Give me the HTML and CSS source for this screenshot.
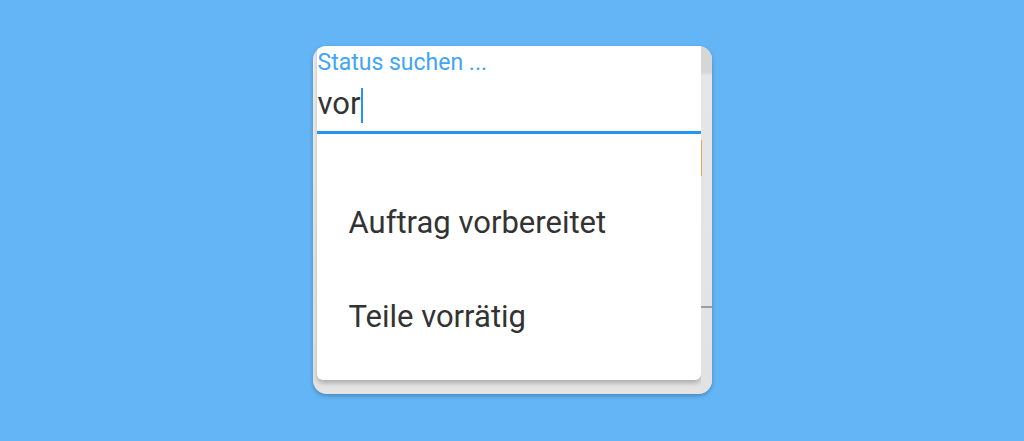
FILE: index.html
```html
<!DOCTYPE html>
<html lang="de">

<head>
    <meta charset="UTF-8">
    <meta name="viewport" content="width=device-width, initial-scale=1.0">
    <title>Status suchen</title>
    <link rel="stylesheet" href="styles.css">
</head>

<body>
    <div class="stage">
        <div class="status-card">
            <!-- Suchfeld mit Vorschlagsliste -->
            <div class="search-panel">
                <label class="search-label" for="status-search">Status suchen ...</label>
                <div class="search-input">
                    <span id="status-search" class="search-value">vor</span><span class="search-caret"></span>
                </div>
                <div class="search-line"></div>

                <ul class="suggest-list">
                    <li class="suggest-item">Auftrag vorbereitet</li>
                    <li class="suggest-item">Teile vorrätig</li>
                </ul>
            </div>

            <!-- Rand der Karte darunter -->
            <div class="card-edge">
                <div class="edge-mark"></div>
                <div class="edge-rule"></div>
            </div>
        </div>
    </div>
</body>

</html>
```

FILE: styles.css
```css
html,
body {
    margin: 0;
    height: 100%;
}

body {
    background: #64b5f6;
    font-family: Roboto, "Noto Sans", Arial, sans-serif;
}

.stage {
    display: flex;
    justify-content: center;
    padding-top: 46px;
}

.status-card {
    display: flex;
    width: 399px;
    height: 348px;
    padding-left: 4px;
    box-sizing: border-box;
    background: linear-gradient(to bottom, #f2f2f2, #e4e4e4);
    border-radius: 14px;
    box-shadow: 0 2px 4px rgba(0, 0, 0, 0.25);
    overflow: hidden;
}

/* Suchfeld */

.search-panel {
    display: flex;
    flex-direction: column;
    width: 384px;
    height: 334px;
    background: #fff;
    border-radius: 0 0 6px 6px;
    box-shadow: 0 3px 5px rgba(0, 0, 0, 0.25);
}

.search-label {
    display: block;
    margin: 4px 0 0 1px;
    font-size: 23px;
    line-height: 26px;
    color: #42a5f5;
}

.search-input {
    display: flex;
    align-items: center;
    height: 46px;
    margin: 4px 0 0 1px;
}

.search-value {
    font-size: 31px;
    color: #333;
}

.search-caret {
    width: 2px;
    height: 35px;
    margin: 4px 0 0 1px;
    background: #2196f3;
}

.search-line {
    height: 3px;
    margin-top: 5px;
    background: #2196f3;
}

/* Vorschläge */

.suggest-list {
    list-style: none;
    margin: 0;
    padding: 42px 0 0 32px;
}

.suggest-item {
    height: 94px;
    font-size: 31px;
    line-height: 94px;
    color: #333;
}

.card-edge {
    display: flex;
    flex-direction: column;
    width: 11px;
    background: linear-gradient(to bottom, #d6d6d6 0, #d6d6d6 26px, #e6e6e6 30px, #e2e2e2 100%);
}

.edge-mark {
    width: 1px;
    height: 36px;
    margin-top: 94px;
    background: #e0a860;
}

.edge-rule {
    height: 2px;
    margin-top: 130px;
    background: #9e9e9e;
}
```
